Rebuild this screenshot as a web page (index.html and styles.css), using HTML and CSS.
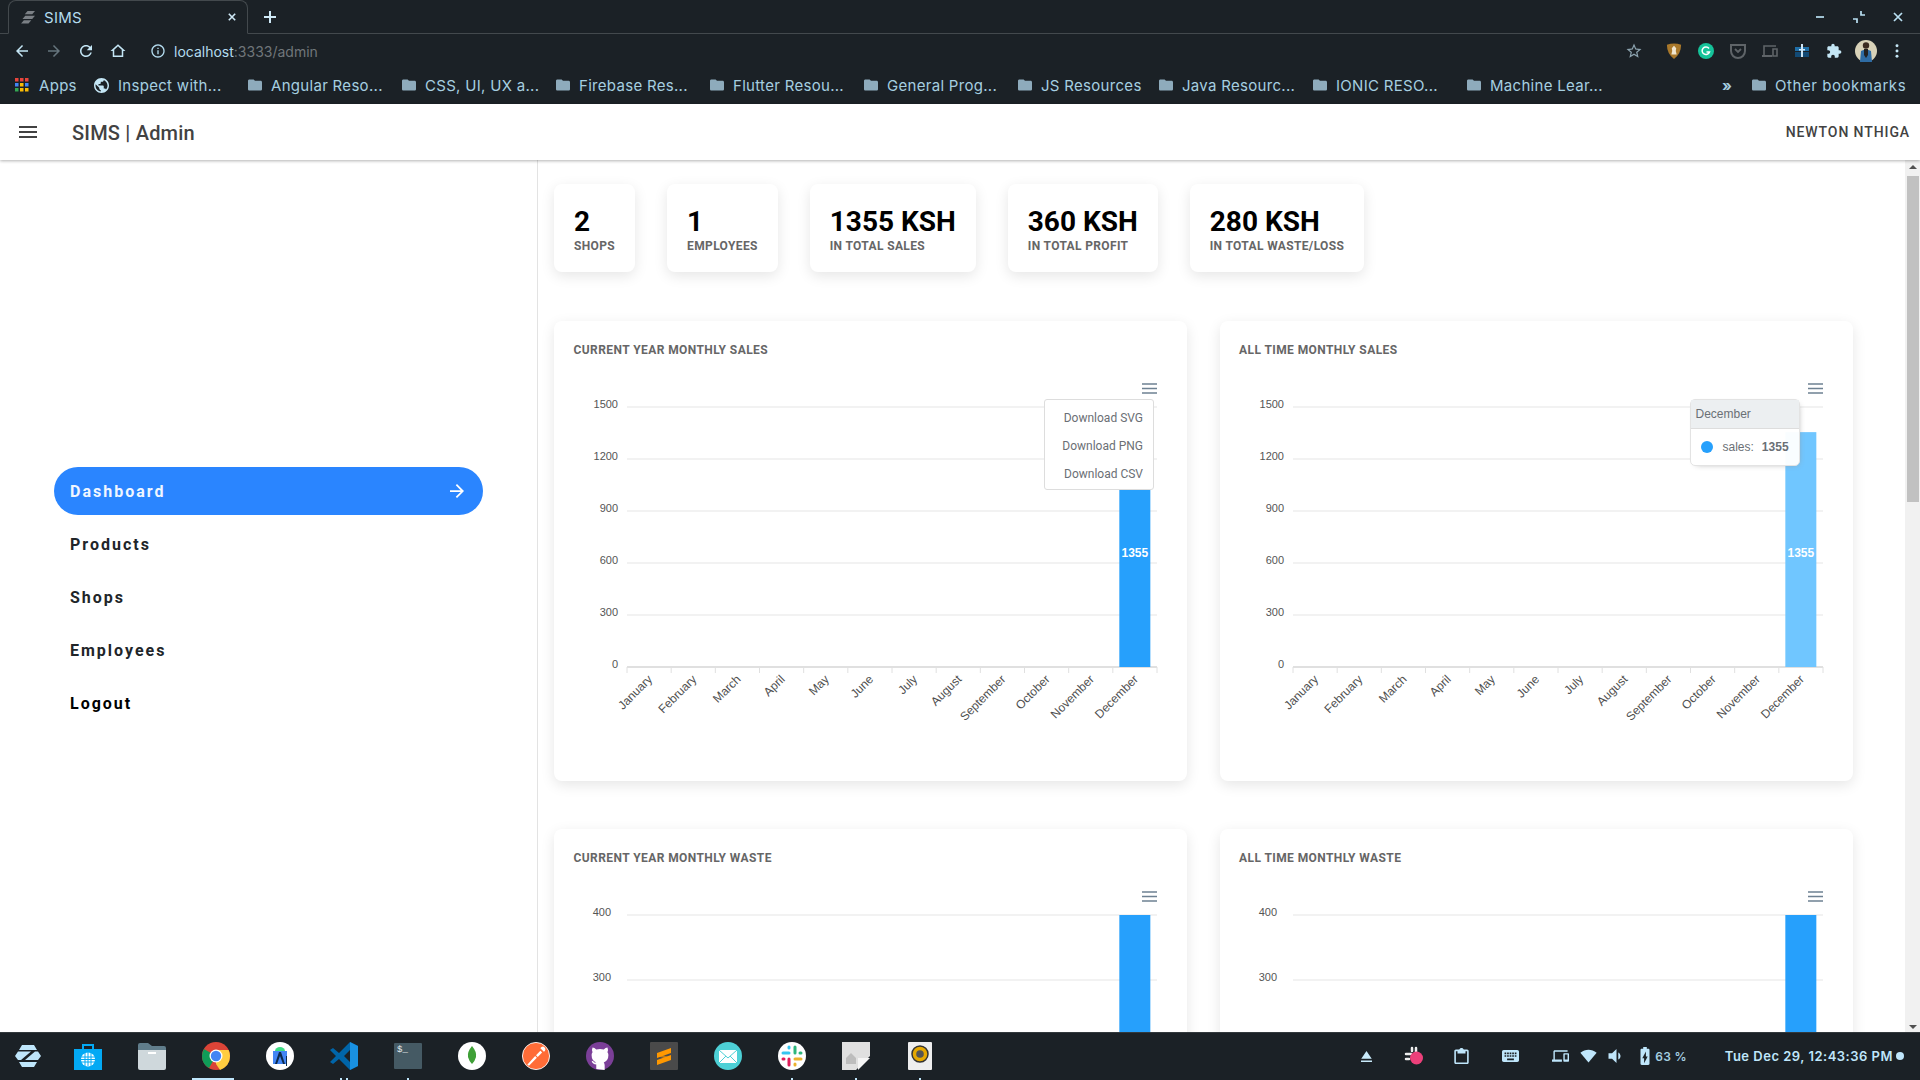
FILE: index.html
```html
<!DOCTYPE html>
<html lang="en">
<head>
    <meta charset="UTF-8">
    <meta name="viewport" content="width=device-width, initial-scale=1.0">
    <title>SIMS</title>
    <link rel="stylesheet" href="styles.css">
</head>
<body>
    <svg class="defs" width="0" height="0">
        <symbol id="i-folder" viewBox="2 4 20 16"><path d="M10 4H4c-1.1 0-2 .9-2 2v12c0 1.1.9 2 2 2h16c1.1 0 2-.9 2-2V8c0-1.1-.9-2-2-2h-8l-2-2z"/></symbol>
    </svg>

    <!-- Browser tabs -->
    <div class="tabstrip">
        <div class="tab">
            <svg class="favicon" viewBox="0 0 16 14"><path d="M7 0h8l-3 3.500H4zM4.500 5H15l-3 3.500H1.500zM3 10h8l-3 3.500H0z"/></svg>
            <span class="tab-title">SIMS</span>
            <svg class="tab-close" viewBox="0 0 10 10"><path d="M1 1l8 8M9 1l-8 8"/></svg>
        </div>
        <svg class="tab-new" viewBox="0 0 12 12"><path d="M6 0v12M0 6h12"/></svg>
        <div class="window-controls">
            <svg viewBox="0 0 12 12"><path d="M2 6h8"/></svg>
            <svg viewBox="0 0 12 12"><path d="M8 0v4h4M0 8h4v4"/></svg>
            <svg viewBox="0 0 12 12"><path d="M2 2l8 8M10 2l-8 8"/></svg>
        </div>
    </div>

    <!-- Address bar -->
    <div class="toolbar">
        <svg class="tool" viewBox="0 0 24 24"><path d="M20 11H7.830l5.590-5.590L12 4l-8 8 8 8 1.410-1.410L7.830 13H20v-2z"/></svg>
        <svg class="tool dim" viewBox="0 0 24 24"><path d="M12 4l-1.410 1.410L16.170 11H4v2h12.170l-5.580 5.590L12 20l8-8z"/></svg>
        <svg class="tool" viewBox="0 0 24 24"><path d="M17.650 6.350C16.200 4.900 14.210 4 12 4c-4.420 0-7.990 3.580-7.990 8s3.570 8 7.990 8c3.730 0 6.840-2.550 7.730-6h-2.080c-.82 2.330-3.040 4-5.650 4-3.310 0-6-2.690-6-6s2.690-6 6-6c1.660 0 3.140.69 4.220 1.780L13 11h7V4l-2.350 2.350z"/></svg>
        <svg class="tool" viewBox="0 0 24 24"><path d="M12 5.690l5 4.500V18H7v-7.810l5-4.500M12 3L2 12h3v8h14v-8h3L12 3z"/></svg>
        <div class="omnibox">
            <svg class="info" viewBox="0 0 24 24"><path d="M11 7h2v2h-2zm0 4h2v6h-2zm1-9C6.480 2 2 6.480 2 12s4.480 10 10 10 10-4.480 10-10S17.520 2 12 2zm0 18c-4.410 0-8-3.590-8-8s3.590-8 8-8 8 3.590 8 8-3.590 8-8 8z"/></svg>
            <span class="url">localhost<span class="url-rest">:3333/admin</span></span>
        </div>
        <div class="extensions">
            <svg class="star" viewBox="0 0 24 24"><path d="M22 9.240l-7.190-.62L12 2 9.190 8.630 2 9.240l5.460 4.730L5.820 21 12 17.270 18.180 21l-1.630-7.030L22 9.240zM12 15.400l-3.760 2.270 1-4.280-3.320-2.880 4.380-.38L12 6.100l1.710 4.040 4.380.38-3.320 2.880 1 4.280L12 15.400z"/></svg>
            <svg class="ext" viewBox="0 0 16 18"><path fill="#a9782a" d="M0 2q8-3 16 0 0 10-8 16Q0 12 0 2z"/><path fill="#f0e6d0" d="M5 13h6l-1-4 .5-3-2.500-3-2.500 3 .5 3z"/></svg>
            <svg class="ext" viewBox="0 0 16 16"><circle cx="8" cy="8" r="8" fill="#15c39a"/><path fill="none" stroke="#fff" stroke-width="1.500" d="M11 5.500A3.800 3.800 0 1 0 11.500 9H8.500"/></svg>
            <svg class="ext" viewBox="0 0 16 16"><path fill="none" stroke="#5f6468" stroke-width="2" d="M1 2h14v6a7 7 0 0 1-14 0z"/><path fill="none" stroke="#5f6468" stroke-width="1.800" d="M5 6l3 3 3-3"/></svg>
            <svg class="ext" viewBox="0 0 16 16"><path fill="none" stroke="#5f6468" stroke-width="1.600" d="M2 13V3h12M15 6h-4v7h4z"/><path fill="#5f6468" d="M0 12h10v2H0z"/></svg>
            <svg class="ext" viewBox="0 0 16 16"><path fill="#1f6fa8" d="M1 4h14v4H1z"/><path fill="#124a75" d="M1 9h14v5H1z"/><path fill="#cfe6f5" d="M7 1h2v13H7zM5 6h6v1.500H5z"/></svg>
            <svg class="ext ext-light" viewBox="0 0 24 24"><path d="M20.500 11H19V7c0-1.100-.9-2-2-2h-4V3.500C13 2.120 11.880 1 10.500 1S8 2.120 8 3.500V5H4c-1.100 0-1.990.9-1.990 2v3.800H3.500c1.490 0 2.700 1.210 2.700 2.700s-1.210 2.700-2.700 2.700H2V20c0 1.100.9 2 2 2h3.800v-1.500c0-1.490 1.210-2.700 2.700-2.700 1.490 0 2.700 1.210 2.700 2.700V22H17c1.100 0 2-.9 2-2v-4h1.500c1.380 0 2.500-1.120 2.500-2.500S21.880 11 20.500 11z"/></svg>
            <svg class="avatar" viewBox="0 0 22 22"><circle cx="11" cy="11" r="11" fill="#d8d2b8"/><path fill="#2e6ca4" d="M5 22l1-11q5-3 10 0l1 11z"/><path fill="#222" d="M9 9h4v6l-2 3-2-3z"/><circle cx="11" cy="5.500" r="3.200" fill="#3a2a20"/></svg>
            <svg class="dots" viewBox="0 0 4 16"><circle cx="2" cy="2" r="1.700"/><circle cx="2" cy="8" r="1.700"/><circle cx="2" cy="14" r="1.700"/></svg>
        </div>
    </div>

    <!-- Bookmarks -->
    <div class="bookmarks">
        <div class="mark mark-apps">
            <svg class="apps-grid" viewBox="0 0 14 14">
                <path fill="#e8453c" d="M0 0h3.500v3.500H0zM5 0h3.500v3.500H5zM10 0h3.500v3.500H10z"/>
                <path fill="#4285f4" d="M0 5h3.500v3.500H0zM10 5h3.500v3.500H10z"/>
                <path fill="#fbbc05" d="M5 5h3.500v3.500H5zM5 10h3.500v3.500H5zM10 10h3.500v3.500H10z"/>
                <path fill="#34a853" d="M0 10h3.500v3.500H0z"/>
            </svg>
            Apps
        </div>
        <div class="mark mark-inspect">
            <svg class="globe" viewBox="2 2 20 20"><path d="M12 2C6.480 2 2 6.480 2 12s4.480 10 10 10 10-4.480 10-10S17.520 2 12 2zm-1 17.930c-3.950-.49-7-3.850-7-7.930 0-.62.08-1.210.21-1.790L9 15v1c0 1.100.9 2 2 2v1.930zm6.900-2.540c-.26-.81-1-1.390-1.900-1.390h-1v-3c0-.55-.45-1-1-1H8v-2h2c.55 0 1-.45 1-1V7h2c1.100 0 2-.9 2-2v-.41c2.930 1.190 5 4.060 5 7.410 0 2.080-.8 3.970-2.100 5.390z"/></svg>
            Inspect with...
        </div>
        <div class="mark"><svg class="folder"><use href="#i-folder"/></svg>Angular Reso...</div>
        <div class="mark"><svg class="folder"><use href="#i-folder"/></svg>CSS, UI, UX a...</div>
        <div class="mark"><svg class="folder"><use href="#i-folder"/></svg>Firebase Res...</div>
        <div class="mark"><svg class="folder"><use href="#i-folder"/></svg>Flutter Resou...</div>
        <div class="mark"><svg class="folder"><use href="#i-folder"/></svg>General Prog...</div>
        <div class="mark mark-short"><svg class="folder"><use href="#i-folder"/></svg>JS Resources</div>
        <div class="mark"><svg class="folder"><use href="#i-folder"/></svg>Java Resourc...</div>
        <div class="mark"><svg class="folder"><use href="#i-folder"/></svg>IONIC RESO...</div>
        <div class="mark"><svg class="folder"><use href="#i-folder"/></svg>Machine Lear...</div>
        <div class="mark mark-more">»</div>
        <div class="mark mark-other"><svg class="folder"><use href="#i-folder"/></svg>Other bookmarks</div>
    </div>

    <!-- App header -->
    <header class="appbar">
        <svg class="burger" viewBox="3 6 18 12"><path d="M3 18h18v-2H3v2zm0-5h18v-2H3v2zm0-7v2h18V6H3z"/></svg>
        <span class="app-title">SIMS | Admin</span>
        <span class="app-user">NEWTON NTHIGA</span>
    </header>

    <div class="layout">
        <aside class="sidebar">
            <nav class="side-nav">
                <a class="nav-item active">Dashboard
                    <svg class="nav-arrow" viewBox="4 4 16 16"><path d="M12 4l-1.410 1.410L16.170 11H4v2h12.170l-5.580 5.590L12 20l8-8z"/></svg>
                </a>
                <a class="nav-item">Products</a>
                <a class="nav-item">Shops</a>
                <a class="nav-item">Employees</a>
                <a class="nav-item logout">Logout</a>
            </nav>
        </aside>

        <main class="main">
            <section class="stats">
                <div class="stat"><div class="stat-value">2</div><div class="stat-label">SHOPS</div></div>
                <div class="stat"><div class="stat-value">1</div><div class="stat-label">EMPLOYEES</div></div>
                <div class="stat"><div class="stat-value">1355 KSH</div><div class="stat-label">IN TOTAL SALES</div></div>
                <div class="stat"><div class="stat-value">360 KSH</div><div class="stat-label">IN TOTAL PROFIT</div></div>
                <div class="stat"><div class="stat-value">280 KSH</div><div class="stat-label">IN TOTAL WASTE/LOSS</div></div>
            </section>

            <section class="charts">
                <div class="card">
                    <h4 class="card-title">CURRENT YEAR MONTHLY SALES</h4>
                    <div class="chart" data-max="1500" data-step="300" data-value="1355">
                        <div class="chart-menu">
                            <div>Download SVG</div>
                            <div>Download PNG</div>
                            <div>Download CSV</div>
                        </div>
                    </div>
                </div>
                <div class="card">
                    <h4 class="card-title">ALL TIME MONTHLY SALES</h4>
                    <div class="chart" data-max="1500" data-step="300" data-value="1355" data-hover="1">
                        <div class="chart-tip">
                            <div class="tip-title">December</div>
                            <div class="tip-row"><i class="tip-dot"></i><span>sales:</span><b>1355</b></div>
                        </div>
                    </div>
                </div>
                <div class="card">
                    <h4 class="card-title">CURRENT YEAR MONTHLY WASTE</h4>
                    <div class="chart" data-max="400" data-step="100" data-value="400"></div>
                </div>
                <div class="card">
                    <h4 class="card-title">ALL TIME MONTHLY WASTE</h4>
                    <div class="chart" data-max="400" data-step="100" data-value="400"></div>
                </div>
            </section>
        </main>

        <div class="scrollbar">
            <i class="scroll-up"></i>
            <div class="scroll-thumb"></div>
            <i class="scroll-down"></i>
        </div>
    </div>

    <!-- Desktop dock -->
    <footer class="taskbar">
        <div class="dock">
            <div class="dock-item dock-first"><svg viewBox="0 0 28 28"><path fill="#bfe6fb" d="M8 3h12l3 5H5zM5 20h18l-3 5H8z"/><path fill="#bfe6fb" d="M4 9.500h13L7 18H4l-3-4zM24 9.500l3 4.500-3 4H11l10-8.500z"/></svg></div>
            <div class="dock-item"><svg viewBox="0 0 28 28"><path fill="none" stroke="#03a9f4" stroke-width="2" d="M9 8V3h10v5"/><path fill="#03a9f4" d="M0 7h28v21H0z"/><circle cx="14" cy="17.500" r="7" fill="#fff"/><path stroke="#03a9f4" d="M7 15h14M7 17.500h14M7 20h14M11 10v14M14 10v14M17 10v14"/></svg></div>
            <div class="dock-item"><svg viewBox="0 0 28 28"><path fill="#607d8b" d="M0 3q0-2 2-2h8l4 3h12q2 0 2 2v4H0z"/><path fill="#cfd8dc" d="M0 8h28v18q0 2-2 2H2q-2 0-2-2z"/><path fill="#fff" d="M10 10h8v2h-8z"/></svg></div>
            <div class="dock-item active"><svg viewBox="0 0 28 28"><circle cx="14" cy="14" r="14" fill="#db4437"/><path fill="#0f9d58" d="M14 14L7 26q-7-4-7-12 0-4 2-7z"/><path fill="#ffcd40" d="M14 8h12.600q1.400 3 1.400 6 0 10-10 14l-4-6z"/><circle cx="14" cy="14" r="6.500" fill="#fff"/><circle cx="14" cy="14" r="5.200" fill="#4285f4"/></svg></div>
            <div class="dock-item"><svg viewBox="0 0 28 28"><circle cx="14" cy="14" r="14" fill="#fff"/><path fill="#3ddc84" d="M9 9a5 4 0 0 1 10 0z"/><path fill="#4285f4" d="M7 9h14v13H7z"/><path fill="#0d2a4c" d="M13 10h2l4 12h-2l-3-8-3 8H9zM20 14h1v10h-1z"/></svg></div>
            <div class="dock-item running two"><svg viewBox="0 0 28 28"><path fill="#0065a9" d="M20 0l8 4v20l-8 4-11-11-6 5-3-2 6-6-6-6 3-2 6 5zM20 8l-6 6 6 6z"/><path fill="#1f9cf0" d="M20 0l8 4v20l-8 4z" opacity=".8"/></svg></div>
            <div class="dock-item running"><svg viewBox="0 0 28 28"><rect width="28" height="26" y="1" rx="1" fill="#455a64"/><text class="term-text" x="3" y="10">$_</text></svg></div>
            <div class="dock-item"><svg viewBox="0 0 28 28"><circle cx="14" cy="14" r="14" fill="#fff"/><path fill="#3fa037" d="M14 4q5 6 4 11-1 4-4 7-3-3-4-7-1-5 4-11z"/></svg></div>
            <div class="dock-item"><svg viewBox="0 0 32 32"><circle cx="16" cy="16" r="15.500" fill="#ff6c37" stroke="#fff" stroke-width="1"/><path fill="#fff" d="M6 26l9-10 2 2-9 9zM16 15l5-5 2 2-5 5zM21 7a3 3 0 1 1 4 4z"/></svg></div>
            <div class="dock-item"><svg viewBox="0 0 30 30"><circle cx="15" cy="15" r="15" fill="#7b3f98"/><path fill="#fff" d="M11 29v-5q-4 0-5-4 2 0 3 2h2q-5-2-5-8 0-2 1-3-1-3 0-5 2 0 4 2 4-1 8 0 2-2 4-2 1 2 0 5 1 1 1 3 0 6-5 8 1 1 1 3v5z"/></svg></div>
            <div class="dock-item"><svg viewBox="0 0 28 28"><rect width="28" height="28" rx="1" fill="#4a4a4a"/><path fill="#ff9800" d="M21 6v5l-14 5v-5zM21 13v5L7 23v-5z"/><path fill="#ff9800" d="M7 11l14 5v2L7 14z" opacity=".6"/></svg></div>
            <div class="dock-item"><svg viewBox="0 0 28 28"><circle cx="14" cy="14" r="14" fill="#4dd0d6"/><path fill="#fff" d="M5 8h18v13H5z"/><path fill="none" stroke="#4dd0d6" d="M5 8l9 8 9-8M5 21l7-7M23 21l-7-7"/></svg></div>
            <div class="dock-item running"><svg viewBox="0 0 28 28"><circle cx="14" cy="14" r="14" fill="#fff"/><g stroke-width="3" stroke-linecap="round"><path stroke="#36c5f0" d="M5 11h6M11 5v1"/><path stroke="#2eb67d" d="M17 5v6M23 11h-1"/><path stroke="#ecb22e" d="M17 17h6M17 23v-1"/><path stroke="#e01e5a" d="M11 17v6M5 17h1"/></g></svg></div>
            <div class="dock-item running"><svg viewBox="0 0 28 28"><path fill="#e0e0e0" d="M0 0h28v14L14 28H0z"/><path fill="#bdbdbd" d="M4 22v-6l5-5 5 5v6z"/><path fill="#f5f5f5" d="M16 28V16h12z"/></svg></div>
            <div class="dock-item running"><svg viewBox="0 0 24 28"><rect width="24" height="28" rx="1" fill="#eeeeee"/><circle cx="12" cy="12" r="8" fill="#e6a800" stroke="#333" stroke-width="1.500"/><circle cx="12" cy="12" r="3.800" fill="#555"/></svg></div>
        </div>
        <div class="tray">
            <div class="tray-group wide">
                <svg class="tray-eject" viewBox="5 5 14 14"><path d="M5 17h14v2H5zm7-12L5.330 15h13.340z"/></svg>
                <svg class="tray-slack" viewBox="0 0 20 20"><g stroke="#eee" stroke-width="2.500" stroke-linecap="round"><path d="M2 8h5M8 2v3M12 2v5M2 13h3"/></g><circle cx="12.500" cy="12" r="6.500" fill="#ec407a"/></svg>
                <svg class="tray-icon" viewBox="3 1 18 20"><path d="M19 3h-4.180C14.400 1.840 13.300 1 12 1c-1.300 0-2.400.84-2.820 2H5c-1.100 0-2 .9-2 2v14c0 1.100.9 2 2 2h14c1.100 0 2-.9 2-2V5c0-1.100-.9-2-2-2zm0 16H5V5h2v3h10V5h2v14z"/></svg>
                <svg class="tray-icon" viewBox="2 5 20 14"><path d="M20 5H4c-1.100 0-1.990.9-1.990 2L2 17c0 1.100.9 2 2 2h16c1.100 0 2-.9 2-2V7c0-1.100-.9-2-2-2zm-9 3h2v2h-2V8zm0 3h2v2h-2v-2zM8 8h2v2H8V8zm0 3h2v2H8v-2zm-1 2H5v-2h2v2zm0-3H5V8h2v2zm9 7H8v-2h8v2zm0-4h-2v-2h2v2zm0-3h-2V8h2v2zm3 3h-2v-2h2v2zm0-3h-2V8h2v2z"/></svg>
            </div>
            <div class="tray-group">
                <svg class="tray-icon" viewBox="0 4 24 16"><path d="M4 6h18V4H4c-1.100 0-2 .9-2 2v11H0v3h14v-3H4V6zm19 2h-6c-.55 0-1 .45-1 1v10c0 .55.45 1 1 1h6c.55 0 1-.45 1-1V9c0-.55-.45-1-1-1zm-1 9h-4v-7h4v7z"/></svg>
                <svg class="tray-icon" viewBox="0 3 24 18"><path d="M12 21L.5 7.500C4 4.500 8 3 12 3s8 1.500 11.500 4.500z"/></svg>
                <svg class="tray-icon" viewBox="3 3 18 18"><path d="M3 9v6h4l5 5V4L7 9H3zm13.500 3c0-1.770-1.020-3.290-2.500-4.030v8.050c1.480-.73 2.500-2.250 2.500-4.020z"/></svg>
                <svg class="tray-batt" viewBox="7 2 10 20"><path d="M15.670 4H14V2h-4v2H8.330C7.600 4 7 4.600 7 5.330v15.330C7 21.400 7.600 22 8.330 22h7.330c.74 0 1.340-.6 1.340-1.330V5.330C17 4.600 16.400 4 15.670 4zM11 20v-5.500H9L13 7v5.500h2L11 20z"/></svg>
                <span class="tray-pct">63 %</span>
            </div>
            <span class="tray-clock">Tue Dec 29, 12:43:36 PM</span>
            <i class="tray-dot"></i>
        </div>
    </footer>

    <script src="charts.js"></script>
</body>
</html>
```

FILE: styles.css
```css
* {
    margin: 0;
    padding: 0;
    box-sizing: border-box;
}

html, body {
    height: 100%;
    overflow: hidden;
}

body {
    display: flex;
    flex-direction: column;
    background: #fff;
    font-family: Roboto, 'Liberation Sans', sans-serif;
}

.defs {
    position: absolute;
}

/* Browser chrome */
.tabstrip {
    display: flex;
    align-items: flex-end;
    height: 34px;
    padding-left: 8px;
    background: #1b2126;
    border-bottom: 1px solid #43494d;
}

.tab {
    display: flex;
    align-items: center;
    width: 240px;
    height: 34px;
    margin-bottom: -1px;
    padding: 0 8px 0 12px;
    background: #1b2126;
    border: 1px solid #43494d;
    border-bottom-color: #1b2126;
    border-radius: 8px 8px 0 0;
}

.favicon {
    width: 15px;
    height: 13px;
    fill: #7b8085;
}

.tab-title {
    margin-left: 8px;
    font: 15px Inter, sans-serif;
    letter-spacing: 0.3px;
    color: #b4dcef;
}

.tab-close {
    width: 8px;
    height: 8px;
    margin-left: auto;
    margin-right: 3px;
    fill: none;
    stroke: #cfe9f6;
    stroke-width: 2;
}

.tab-new {
    width: 12px;
    height: 12px;
    margin: 0 0 10px 16px;
    fill: none;
    stroke: #cfe9f6;
    stroke-width: 2;
}

.window-controls {
    display: flex;
    gap: 27px;
    margin: 0 16px 10px auto;
}

.window-controls svg {
    width: 12px;
    height: 12px;
    fill: none;
    stroke: #b9e0f2;
    stroke-width: 1.700;
}

.toolbar {
    display: flex;
    align-items: center;
    height: 36px;
    padding: 0 0 2px 13px;
    background: #1b2126;
}

.tool {
    width: 18px;
    height: 18px;
    margin-right: 14px;
    fill: #c4e6f5;
}

.tool.dim {
    fill: #66757d;
}

.omnibox {
    display: flex;
    align-items: center;
    margin-left: 9px;
}

.info {
    width: 16px;
    height: 16px;
    fill: #b4dcef;
}

.url {
    margin-left: 8px;
    font: 14px Inter, sans-serif;
    color: #b4dcef;
}

.url-rest {
    color: #70767a;
}

.extensions {
    display: flex;
    align-items: center;
    margin-left: auto;
    padding-right: 21px;
}

.star {
    width: 18px;
    height: 18px;
    margin-right: 23px;
    fill: #8da4b0;
}

.ext {
    width: 16px;
    height: 16px;
    margin-right: 16px;
}

.ext-light {
    fill: #c4e6f5;
    margin-right: 13px;
}

.avatar {
    width: 22px;
    height: 22px;
    margin-right: 18px;
}

.dots {
    width: 4px;
    height: 14px;
    fill: #c4e6f5;
}

/* Chrome gives elided bookmarks one fixed width */
.bookmarks {
    display: flex;
    align-items: center;
    height: 34px;
    padding: 0 13px 4px 15px;
    background: #1b2126;
    font: 15px Inter, sans-serif;
    letter-spacing: 0.3px;
    color: #a6cfe0;
}

.mark {
    flex: 0 0 154px;
    display: flex;
    align-items: center;
    white-space: nowrap;
}

.mark-apps {
    flex-basis: 79px;
    gap: 10px;
}

.apps-grid {
    width: 14px;
    height: 14px;
}

.mark-inspect {
    gap: 9px;
}

.mark-short {
    flex-basis: 141px;
}

.mark-more {
    flex-basis: 30px;
    margin-left: auto;
    font-weight: 700;
}

.mark-other {
    flex-basis: 155px;
    letter-spacing: 0.55px;
}

.globe {
    width: 15px;
    height: 15px;
    fill: #c4e6f5;
}

.folder {
    width: 14px;
    height: 12px;
    margin-right: 9px;
    fill: #8eabbc;
}

/* App header */
.appbar {
    position: relative;
    z-index: 2;
    display: flex;
    align-items: center;
    height: 56px;
    padding: 1px 10px 0 19px;
    background: #fff;
    box-shadow: 0 1px 3px rgba(0, 0, 0, 0.3);
}

.burger {
    width: 18px;
    height: 12px;
    margin-bottom: 1px;
    fill: #424242;
}

.app-title {
    margin-left: 35px;
    font-size: 20px;
    font-weight: 500;
    letter-spacing: 0.2px;
    color: #424242;
}

.app-user {
    margin: 0 0 2px auto;
    font-size: 14px;
    font-weight: 500;
    letter-spacing: 0.9px;
    color: #424242;
}

.layout {
    flex: 1;
    display: flex;
    min-height: 0;
}

/* Sidebar */
.sidebar {
    flex: 0 0 538px;
    display: flex;
    flex-direction: column;
    justify-content: center;
    padding: 2px 0 0 54px;
    border-right: 1px solid #e3e3e3;
}

.side-nav {
    display: flex;
    flex-direction: column;
    gap: 5px;
    width: 429px;
}

.nav-item {
    display: flex;
    align-items: center;
    justify-content: space-between;
    height: 48px;
    padding: 0 19px 0 16px;
    border-radius: 24px;
    font-size: 16px;
    font-weight: 700;
    letter-spacing: 2px;
    color: #212529;
}

.nav-item.active {
    background: #2a85ff;
    color: #f0f6ff;
}

.nav-item.logout {
    color: #000;
}

.nav-arrow {
    width: 14px;
    height: 14px;
    fill: #fff;
}

/* Main column */
.main {
    flex: 1;
    min-width: 0;
    padding: 24px 0 0 16px;
    overflow: hidden;
}

.stats {
    display: flex;
    align-items: flex-start;
    gap: 32px;
    margin-bottom: 49px;
}

.stat {
    padding: 20px 20px 18px;
    background: #fff;
    border-radius: 8px;
    box-shadow: 0 4px 14px rgba(0, 0, 0, 0.1);
}

.stat-value {
    font-size: 28px;
    font-weight: 700;
    line-height: 35px;
    color: #000;
}

.stat-label {
    font-size: 12px;
    font-weight: 700;
    line-height: 15px;
    letter-spacing: 0.36px;
    color: #666;
    white-space: nowrap;
}

.charts {
    display: grid;
    grid-template-columns: 633px 633px;
    gap: 48px 32.500px;
}

.card {
    height: 460px;
    padding: 21px 19px 0;
    background: #fff;
    border-radius: 8px;
    box-shadow: 0 4px 14px rgba(0, 0, 0, 0.1);
}

.card-title {
    margin: 0 0 13px 0.5px;
    font-size: 12px;
    font-weight: 700;
    line-height: 16px;
    letter-spacing: 0.42px;
    color: #666;
}

/* Chart overlays sit above the drawn svg */
.chart {
    position: relative;
    width: 595px;
    height: 390px;
}

.chart svg {
    display: block;
    font-family: 'Liberation Sans', Arial, sans-serif;
}

.chart-menu {
    position: absolute;
    top: 28px;
    left: 471px;
    width: 110px;
    padding: 4px 0 1px;
    background: #fff;
    border: 1px solid #ddd;
    border-radius: 3px;
    font-size: 12px;
    color: #6b6f75;
    text-align: right;
}

.chart-menu div {
    height: 28px;
    padding-right: 10px;
    line-height: 28px;
}

.chart-tip {
    position: absolute;
    top: 28px;
    left: 451px;
    width: 110px;
    background: rgba(255, 255, 255, 0.96);
    border: 1px solid #e3e3e3;
    border-radius: 5px;
    box-shadow: 2px 2px 6px -4px #999;
    font: 12px 'Liberation Sans', Arial, sans-serif;
    color: #6a6f75;
}

.tip-title {
    height: 29px;
    padding-left: 5px;
    background: #eceff1;
    border-bottom: 1px solid #ddd;
    line-height: 28px;
}

.tip-row {
    display: flex;
    align-items: center;
    height: 36px;
    padding-left: 10px;
}

.tip-dot {
    width: 12px;
    height: 12px;
    margin-right: 10px;
    border-radius: 50%;
    background: #26a0fc;
}

.tip-row b {
    margin-left: 8px;
}

/* Fake scrollbar of the content pane */
.scrollbar {
    flex: 0 0 15px;
    display: flex;
    flex-direction: column;
    background: #f1f1f1;
}

.scroll-up,
.scroll-down {
    align-self: center;
    width: 0;
    height: 0;
    margin: 5px 0;
    border-left: 4px solid transparent;
    border-right: 4px solid transparent;
}

.scroll-up {
    border-bottom: 4px solid #505050;
}

.scroll-down {
    margin-top: auto;
    margin-bottom: 3px;
    border-top: 4px solid #505050;
}

.scroll-thumb {
    height: 326px;
    margin: 2px 1px 0 2px;
    background: #c1c1c1;
}

/* Desktop dock */
.taskbar {
    position: relative;
    z-index: 2;
    display: flex;
    align-items: center;
    height: 48px;
    padding: 0 16px 1px 0;
    background: #1b2126;
    border-top: 1px solid #33393d;
}

.dock {
    display: flex;
    gap: 8px;
}

.dock-item {
    position: relative;
    display: flex;
    justify-content: center;
    width: 56px;
}

.dock-first {
    margin-right: -4px;
}

.dock-item svg {
    display: block;
    height: 28px;
}

.dock-item.active::after {
    content: "";
    position: absolute;
    left: 4px;
    bottom: -10px;
    width: 42px;
    height: 2px;
    background: #bfe6fb;
}

.dock-item.running::after {
    content: "";
    position: absolute;
    left: 27px;
    bottom: -10px;
    width: 2px;
    height: 2px;
    background: #bfe6fb;
}

.dock-item.two::after {
    left: 24px;
    box-shadow: 6px 0 0 #bfe6fb;
}

.term-text {
    font: 9px 'Liberation Mono', monospace;
    fill: #eceff1;
}

.tray {
    display: flex;
    align-items: center;
    margin-left: auto;
    color: #bfe6fb;
}

.tray-group {
    display: flex;
    align-items: center;
    gap: 11px;
    margin-right: 38px;
}

.tray-group.wide {
    gap: 32px;
    margin-right: 33px;
}

.tray-eject {
    width: 11px;
    height: 11px;
    fill: #c9ebfb;
}

.tray-slack {
    width: 20px;
    height: 20px;
    margin-right: -3px;
}

.tray-icon {
    width: 17px;
    height: 16px;
    fill: #bfe6fb;
}

.tray-batt {
    width: 10px;
    height: 18px;
    margin: 0 -6px 0 4px;
    fill: #bfe6fb;
}

.tray-pct {
    font: 600 12px Inter, sans-serif;
    letter-spacing: 0.3px;
    color: #a6cfe0;
}

.tray-clock {
    font: 600 13px Inter, sans-serif;
    letter-spacing: 0.5px;
    white-space: nowrap;
}

.tray-dot {
    width: 8px;
    height: 8px;
    margin-left: 3px;
    border-radius: 50%;
    background: #bfe6fb;
}
```

FILE: charts.js
```js
// Draws the four column charts, only December has data
const MONTHS = ['January', 'February', 'March', 'April', 'May', 'June', 'July',
    'August', 'September', 'October', 'November', 'December'];

const LEFT = 54, RIGHT = 584, TOP = 36, BOTTOM = 296;

function drawChart(el) {
    const max = +el.dataset.max;
    const step = +el.dataset.step;
    const value = +el.dataset.value;
    const colW = (RIGHT - LEFT) / 12;
    // labels hug the widest value, so 3 digit axes sit further left
    const labelX = max >= 1000 ? 45 : 38;
    let s = '';

    // grid lines and y labels
    for (let v = 0; v <= max; v += step) {
        const y = BOTTOM - (v / max) * (BOTTOM - TOP);
        s += `<line x1="${LEFT}" x2="${RIGHT}" y1="${y}" y2="${y}" stroke="#eeeeee" stroke-width="1.500"/>`;
        s += `<text x="${labelX}" y="${y + 1}" text-anchor="end" font-size="11" fill="#555">${v}</text>`;
    }

    // x axis and month labels
    s += `<line x1="${LEFT}" x2="${RIGHT}" y1="${BOTTOM}" y2="${BOTTOM}" stroke="#e0e0e0" stroke-width="2"/>`;
    for (let i = 0; i <= 12; i++) {
        const x = LEFT + i * colW;
        s += `<line x1="${x}" x2="${x}" y1="${BOTTOM}" y2="${BOTTOM + 6}" stroke="#e0e0e0"/>`;
    }
    MONTHS.forEach((m, i) => {
        const x = LEFT + (i + 0.5) * colW + 4;
        const y = BOTTOM + 13;
        s += `<text transform="rotate(-45 ${x} ${y})" x="${x}" y="${y}" text-anchor="end" font-size="12" fill="#4f4f4f">${m}</text>`;
    });

    // the December bar
    const barH = (value / max) * (BOTTOM - TOP);
    const barX = LEFT + 11 * colW + 6.500;
    const hover = el.dataset.hover;
    s += `<rect x="${barX}" y="${BOTTOM - barH}" width="31" height="${barH}" fill="${hover ? '#70c6ff' : '#26a0fc'}"/>`;
    s += `<text x="${barX + 15.500}" y="186" text-anchor="middle" font-size="12" font-weight="700" fill="#fff">${value}</text>`;

    // toolbar menu icon
    s += `<path d="M${RIGHT - 15} 13h15M${RIGHT - 15} 17.500h15M${RIGHT - 15} 22h15" stroke="#6e8192" stroke-width="1.500"/>`;

    el.insertAdjacentHTML('afterbegin', `<svg width="595" height="390" viewBox="0 0 595 390">${s}</svg>`);
}

document.querySelectorAll('.chart').forEach(drawChart);
```
